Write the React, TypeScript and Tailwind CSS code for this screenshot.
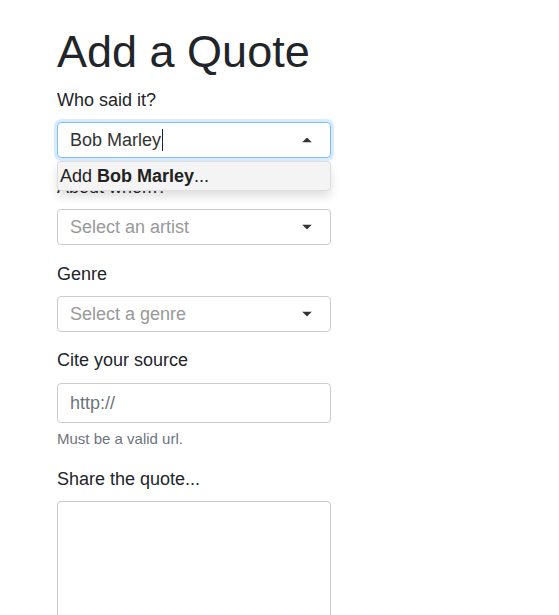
function Caret({up = false}: {up?: boolean}) {
    return (
        <svg width="10" height="5" viewBox="0 0 10 5" className="absolute right-[18px] top-1/2 -translate-y-1/2">
            {up ? <path d="M0 5 L5 0 L10 5 Z" fill="#333"/> : <path d="M0 0 L5 5 L10 0 Z" fill="#333"/>}
        </svg>
    )
}

function FakeSelect({placeholder}: {placeholder: string}) {
    return (
        <div className="relative h-[36px] w-full rounded-[4px] border border-[#ccc] bg-white pl-[12px] flex items-center">
            <span className="text-[18px] text-[#999]">{placeholder}</span>
            <Caret/>
        </div>
    )
}

export default function App() {
    return (
        <div className="min-h-screen bg-white font-['Liberation_Sans',Arial,sans-serif] text-[#212529]">
            <div className="ml-[57px] pt-[24px] w-[274px]">
                <h1 className="text-[45px] leading-[55px] mb-[8px] whitespace-nowrap">Add a Quote</h1>

                <div className="relative mb-[16px]">
                    <label className="block text-[18px] leading-[27px] mb-[8px]">Who said it?</label>
                    <div className="relative h-[36px] w-full rounded-[4px] border border-[#80bdff] bg-white pl-[12px] flex items-center shadow-[0_0_0_3px_rgba(0,123,255,0.15)]">
                        <span className="text-[18px] text-[#333]">Bob Marley</span>
                        <span className="inline-block w-px h-[22px] bg-[#222] ml-[1px]"></span>
                        <Caret up/>
                    </div>
                    <div className="absolute left-0 right-0 top-[74px] z-10 h-[30px] rounded-[4px] border border-[#ddd] bg-[#f4f4f4] shadow-[0_6px_10px_rgba(0,0,0,0.12)] flex items-center pl-[2px]">
                        <span className="text-[18px] text-[#222]">Add <b>Bob Marley</b>...</span>
                    </div>
                </div>

                <div className="mb-[16px]">
                    <label className="block text-[18px] leading-[27px] mb-[8px]">About whom?</label>
                    <FakeSelect placeholder="Select an artist"/>
                </div>

                <div className="mb-[15px]">
                    <label className="block text-[18px] leading-[27px] mb-[8px]">Genre</label>
                    <FakeSelect placeholder="Select a genre"/>
                </div>

                <div className="mb-[17px]">
                    <label className="block text-[18px] leading-[27px] mb-[9px]">Cite your source</label>
                    <div className="h-[40px] w-full rounded-[4px] border border-[#ccc] bg-white pl-[12px] flex items-center">
                        <span className="text-[18px] text-[#6c757d]">http://</span>
                    </div>
                    <p className="mt-[5px] text-[15px] leading-[21px] text-[#6c757d]">Must be a valid url.</p>
                </div>

                <div>
                    <label className="block text-[18px] leading-[27px] mb-[8px]">Share the quote...</label>
                    <div className="h-[150px] w-full rounded-[4px] border border-[#ccc] bg-white"></div>
                </div>
            </div>
        </div>
    )
}
